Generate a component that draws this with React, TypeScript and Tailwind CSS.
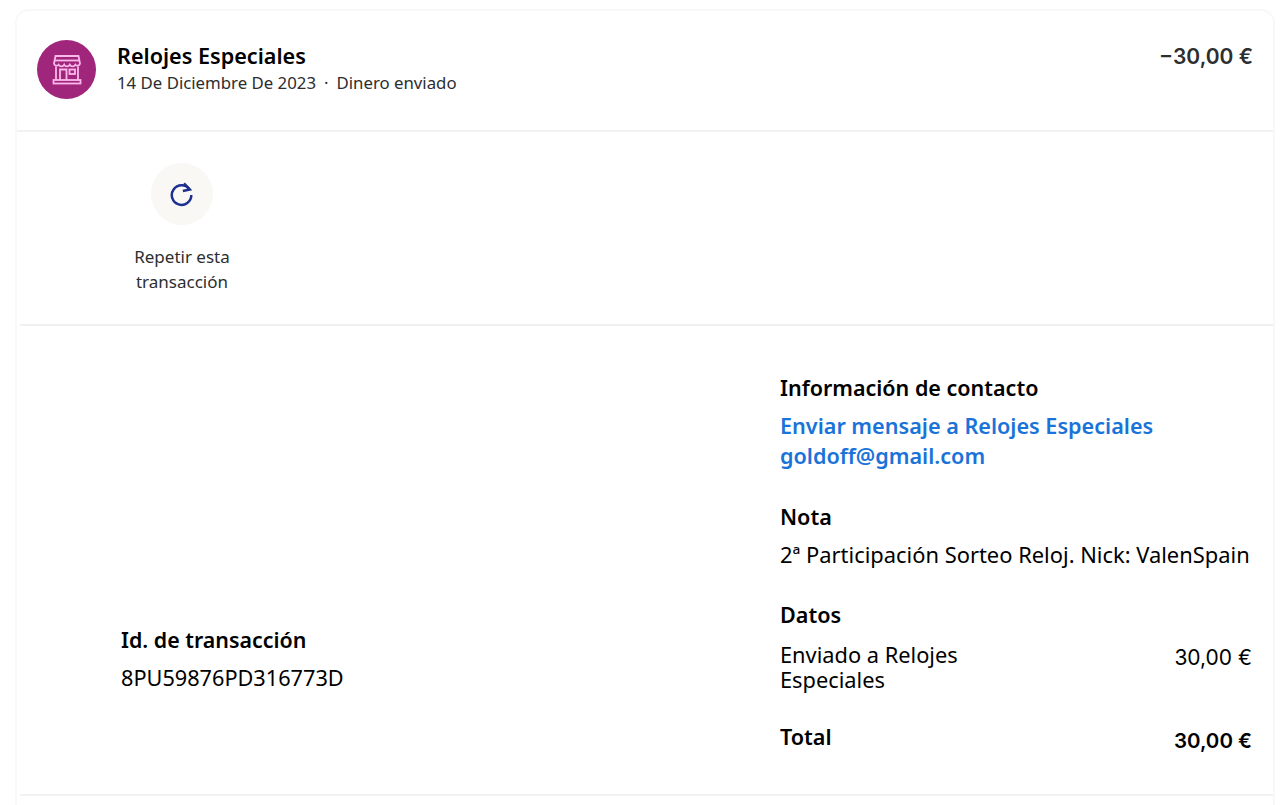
import React from "react";

const font = { fontFamily: '"Noto Sans", sans-serif' };
const numberFont = { fontFamily: 'Inter, "Noto Sans", sans-serif' };

function StoreIcon() {
  return (
    <svg width="32" height="32" viewBox="0 0 32 32" fill="none" stroke="#fab8ea" strokeWidth="1.8">
      <path d="M4.5 2h23l1.5 7.5a2.6 2.6 0 0 1-4.6 1.2 3.2 3.2 0 0 1-5.6 0 3.2 3.2 0 0 1-5.6 0 3.2 3.2 0 0 1-5.6 0A2.6 2.6 0 0 1 3 9.500z" />
      <path d="M3.500 6.500h25" />
      <path d="M5 12.500V26M27 12.500V26" />
      <path d="M9 26V15.500h6.500V26" />
      <rect x="18.500" y="15.500" width="5.500" height="4.500" />
      <rect x="2.500" y="26" width="27" height="3.500" />
    </svg>
  );
}

function RepeatIcon() {
  return (
    <svg width="26" height="26" viewBox="0 0 24 24" fill="none" stroke="#1d2f8f" strokeWidth="2.3">
      <path d="M18.800 7.600A9 9 0 1 0 20.600 13" />
      <path d="M13.800 2.200l5.400 5.600-6.400 1.400" />
    </svg>
  );
}

export default function App() {
  return (
    <div className="w-[1280px] h-[805px] overflow-hidden bg-white pt-[9px] pl-[15px] pr-[5px] text-[#111]" style={font}>
      <div className="rounded-t-[14px] border-t-2 border-x-2 border-[#f8f8f8] h-[796px]">
        <div className="h-[121px] border-b-2 border-[#f2f2f2] flex items-start justify-between pl-[20px] pr-[20px] pt-[29px]">
          <div className="flex items-start gap-[21px]">
            <div className="w-[59px] h-[59px] rounded-full bg-[#a0267c] flex items-center justify-center">
              <StoreIcon />
            </div>
            <div className="pt-[1px]">
              <div className="text-[21.600px] leading-[30px] font-semibold text-black">Relojes Especiales</div>
              <div className="text-[16.800px] leading-[24px] text-[#2c2e2f] flex">
                <span>14 De Diciembre De 2023</span>
                <span className="mx-[8px]">·</span>
                <span>Dinero enviado</span>
              </div>
            </div>
          </div>
          <div className="text-[21px] leading-[30px] font-semibold text-[#2c2e2f] pt-[2px]" style={numberFont}>−30,00 €</div>
        </div>

        <div className="h-[194px] border-b-2 border-[#f0f0f0] ml-[3px] pt-[31px] pl-[97px]">
          <div className="w-[130px] flex flex-col items-center">
            <div className="w-[62px] h-[62px] rounded-full bg-[#f9f8f5] flex items-center justify-center">
              <RepeatIcon />
            </div>
            <div className="mt-[19px] text-[17px] leading-[25px] text-[#2c2e2f] text-center whitespace-nowrap">
              Repetir esta<br />transacción
            </div>
          </div>
        </div>

        <div className="h-[470px] border-b-2 border-[#f2f2f2] flex ml-[3px]">
          <div className="w-[760px] pl-[101px] pt-[299px]">
            <div className="text-[21.400px] leading-[30px] font-semibold text-black">Id. de transacción</div>
            <div className="mt-[8px] text-[21.700px] leading-[30px] text-black">8PU59876PD316773D</div>
          </div>
          <div className="w-[472px] pt-[47px]">
            <div className="text-[21.500px] leading-[30px] font-semibold text-black">Información de contacto</div>
            <div className="mt-[8px] text-[21.600px] leading-[30px] font-semibold text-[#1a73d9]">
              <div>Enviar mensaje a Relojes Especiales</div>
              <div>goldoff@gmail.com</div>
            </div>
            <div className="mt-[31px] text-[21.600px] leading-[30px] font-semibold text-black">Nota</div>
            <div className="mt-[8px] text-[21.900px] leading-[30px] text-black whitespace-nowrap">2ª Participación Sorteo Reloj. Nick: ValenSpain</div>
            <div className="mt-[30px] text-[21.600px] leading-[30px] font-semibold text-black">Datos</div>
            <div className="mt-[12px] flex justify-between text-[21.800px] leading-[25px] text-black">
              <div className="w-[230px]">Enviado a Relojes Especiales</div>
              <div className="pt-[3px] text-[21px]" style={numberFont}>30,00 €</div>
            </div>
            <div className="mt-[30px] flex justify-between text-[21.600px] leading-[30px] font-semibold text-black">
              <div>Total</div>
              <div className="pt-[4px] text-[20.500px]" style={numberFont}>30,00 €</div>
            </div>
          </div>
        </div>
      </div>
    </div>
  );
}
